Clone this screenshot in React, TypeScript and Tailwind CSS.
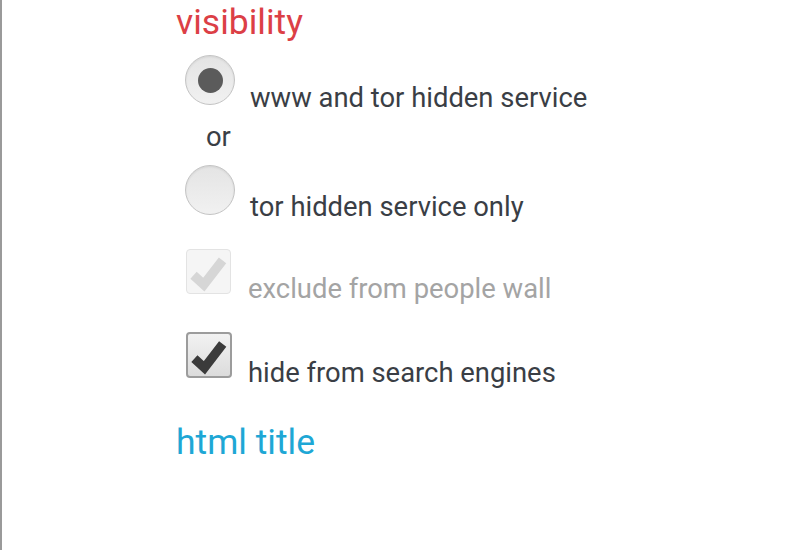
import React from 'react';

const Radio: React.FC<{ checked?: boolean }> = ({ checked }) => (
  <span className="flex h-[50px] w-[50px] shrink-0 items-center justify-center rounded-full border border-[#c4c4c4] bg-gradient-to-b from-[#e4e4e4] to-[#f1f1f1] shadow-[inset_0_1px_2px_rgba(0,0,0,0.08)]">
    {checked && <span className="h-[25px] w-[25px] rounded-full bg-[#5b5b5b]" />}
  </span>
);

const Check: React.FC<{ disabled?: boolean }> = ({ disabled }) => (
  <span
    className={
      disabled
        ? 'flex h-[45px] w-[45px] shrink-0 items-center justify-center rounded-[4px] border border-[#e3e3e3] bg-[#f5f5f5]'
        : 'flex h-[46px] w-[46px] shrink-0 items-center justify-center rounded-[4px] border-2 border-[#9c9c9c] bg-gradient-to-b from-[#f2f2f2] to-[#dcdcdc]'
    }
  >
    <svg viewBox="0 0 46 46" className="h-full w-full">
      <polyline
        points="7,27 18,37 38,11"
        fill="none"
        stroke={disabled ? '#d6d6d6' : '#3b3b3b'}
        strokeWidth="10"
        strokeLinejoin="miter"
      />
    </svg>
  </span>
);

export default function App() {
  return (
    <div className="min-h-[550px] w-[800px] border-l-2 border-[#9a9a9a] bg-white pl-[174px] font-['Roboto',sans-serif]">
      <h2 className="pt-[2px] text-[35.5px] leading-[40px] text-[#dc3f46]">visibility</h2>

      <div className="mt-[13px] ml-[9px] flex items-start">
        <Radio checked />
        <span className="mt-[28px] ml-[15px] text-[27.4px] leading-[30px] text-[#3a3e45]">www and tor hidden service</span>
      </div>

      <div className="mt-[9px] pl-[30px] text-[27.4px] leading-[30px] text-[#3a3e45]">or</div>

      <div className="mt-[13px] ml-[9px] flex items-start">
        <Radio />
        <span className="mt-[27px] ml-[15px] text-[27.4px] leading-[30px] text-[#3a3e45]">tor hidden service only</span>
      </div>

      <div className="mt-[27px] ml-[10px] flex items-start">
        <Check disabled />
        <span className="mt-[25px] ml-[17px] text-[27.4px] leading-[30px] text-[#a4a4a4]">exclude from people wall</span>
      </div>

      <div className="mt-[28px] ml-[10px] flex items-start">
        <Check />
        <span className="mt-[26px] ml-[16px] text-[27.4px] leading-[30px] text-[#3a3e45]">hide from search engines</span>
      </div>

      <h2 className="mt-[34px] text-[35.5px] leading-[40px] text-[#1ea7d5]">html title</h2>
    </div>
  );
}
